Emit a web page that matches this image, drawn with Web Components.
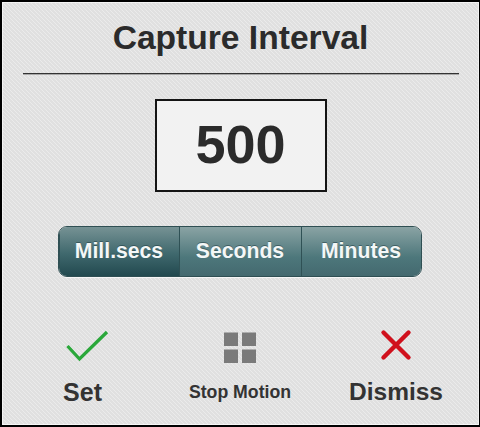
<!DOCTYPE html>
<html>
<head>
<meta charset="utf-8">
<style>
html, body { margin: 0; padding: 0; background: #000; }
body { width: 480px; height: 427px; overflow: hidden; font-family: "Liberation Sans", Arial, sans-serif; }
</style>
</head>
<body>
<capture-dialog>
	<span slot="title">Capture Interval</span>
	<interval-value slot="value">500</interval-value>
	<unit-switch slot="units"></unit-switch>
	<dialog-action slot="actions" size="25" icon="check" style="width:159px">Set</dialog-action>
	<dialog-action slot="actions" size="17.7" icon="grid" style="width:156px">Stop Motion</dialog-action>
	<dialog-action slot="actions" size="24.5" icon="cross" style="width:156px">Dismiss</dialog-action>
</capture-dialog>
<script>
class CaptureDialog extends HTMLElement {
	constructor() {
		super();
		this.attachShadow({ mode: "open" });
		this.shadowRoot.innerHTML = `
			<style>
				:host {
					display: block;
					box-sizing: border-box;
					width: 480px;
					height: 427px;
					padding: 2px 1px 2px 2px;
				}
				.panel {
					box-sizing: border-box;
					height: 100%;
					display: flex;
					flex-direction: column;
					align-items: center;
					border-left: 1px solid #f4f4f4;
					border-top: 1px solid #f4f4f4;
					border-right: 1px solid #f2f2f2;
					border-bottom: 1px solid #f6f6f6;
					background-color: #e5e5e5;
					background-image: repeating-linear-gradient(45deg, #ebebeb 0, #ebebeb 1px, #e0e0e0 1px, #e0e0e0 2.83px);
				}
				h1 {
					box-sizing: border-box;
					width: 436px;
					height: 71px;
					margin: 0;
					padding-top: 15px;
					border-bottom: 1px solid #333;
					box-shadow: 0 1px 0 #a8a8a8;
					text-align: center;
					font-size: 33.6px;
					line-height: 40px;
					font-weight: bold;
					color: #2b2b2b;
				}
				.value { margin-top: 25px; }
				.units { margin-top: 34px; margin-left: -2px; }
				.actions {
					display: flex;
					width: 475px;
					margin-top: 52px;
				}
			</style>
			<div class="panel">
				<h1><slot name="title"></slot></h1>
				<div class="value"><slot name="value"></slot></div>
				<div class="units"><slot name="units"></slot></div>
				<div class="actions"><slot name="actions"></slot></div>
			</div>
		`;
	}
}

class IntervalValue extends HTMLElement {
	constructor() {
		super();
		this.attachShadow({ mode: "open" });
		this.shadowRoot.innerHTML = `
			<style>
				:host {
					display: flex;
					box-sizing: border-box;
					width: 172px;
					height: 93px;
					padding-bottom: 4px;
					align-items: center;
					justify-content: center;
					border: 2px solid #141414;
					background: #f2f2f2;
					font-size: 54px;
					font-weight: bold;
					color: #2b2b2b;
				}
			</style>
			<slot></slot>
		`;
	}
}

class UnitSwitch extends HTMLElement {
	constructor() {
		super();
		this.attachShadow({ mode: "open" });
		const units = ["Mill.secs", "Seconds", "Minutes"];
		const widths = [120, 122, 120];
		this.shadowRoot.innerHTML = `
			<style>
				:host {
					display: flex;
					box-sizing: border-box;
					width: 364px;
					height: 51px;
					border: 1px solid #2f4f53;
					border-radius: 9px;
					overflow: hidden;
					box-shadow: 0 1px 0 #f6f6f6;
				}
				div {
					box-sizing: border-box;
					display: flex;
					align-items: center;
					justify-content: center;
					padding-bottom: 2px;
					font-size: 21.2px;
					font-weight: bold;
					color: #f4f7f7;
					text-shadow: 0 -1px 0 rgba(30, 60, 65, 0.55);
					background: linear-gradient(#8aa3a4, #4d777b 62%, #44696f);
					border-left: 1px solid #2f5155;
				}
				div:first-child { border-left: 0; }
				.on { background: linear-gradient(#769294, #3f686d 55%, #22494f); }
			</style>
			${units.map((u, i) => `<div class="${i == 0 ? "on" : ""}" style="width:${widths[i]}px">${u}</div>`).join("")}
		`;
	}
}

const ICONS = {
	check: `<svg style="margin-left:9px" width="44" height="34" viewBox="0 0 44 34"><path d="M2.5 17 L14.5 30 L42 3" fill="none" stroke="#2aa83a" stroke-width="3.3"/></svg>`,
	cross: `<svg style="margin-top:-1px" width="34" height="34" viewBox="0 0 34 34"><path d="M4.5 4.500 L29.500 29.500 M29.500 4.500 L4.500 29.500" fill="none" stroke="#d0101c" stroke-width="4.4" stroke-linecap="round"/></svg>`,
	grid: `<svg style="margin-top:2px" width="34" height="34" viewBox="0 0 34 34" fill="#7a7a7a"><rect x="1" y="1.500" width="14" height="13.500"/><rect x="19" y="1.500" width="14" height="13.500"/><rect x="1" y="18.500" width="14" height="13.500"/><rect x="19" y="18.500" width="14" height="13.500"/></svg>`
};

class DialogAction extends HTMLElement {
	constructor() {
		super();
		this.attachShadow({ mode: "open" });
		const size = this.getAttribute("size");
		this.shadowRoot.innerHTML = `
			<style>
				:host {
					display: flex;
					flex-direction: column;
					align-items: center;
					color: #333;
					font-weight: bold;
					font-size: ${size}px;
				}
				.icon { height: 34px; }
				svg { display: block; }
				.label { height: 32px; margin-top: 13px; line-height: 32px; white-space: nowrap; }
			</style>
			<div class="icon">${ICONS[this.getAttribute("icon")]}</div>
			<div class="label"><slot></slot></div>
		`;
	}
}

customElements.define("capture-dialog", CaptureDialog);
customElements.define("interval-value", IntervalValue);
customElements.define("unit-switch", UnitSwitch);
customElements.define("dialog-action", DialogAction);
</script>
</body>
</html>
